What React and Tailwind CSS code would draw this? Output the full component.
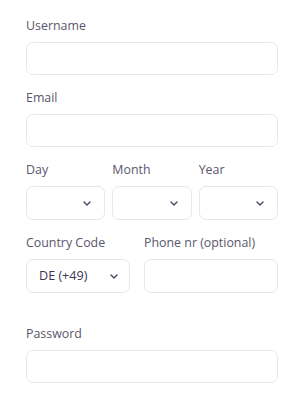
import React from "react";

const Chevron = () => (
  <svg width="8" height="5" viewBox="0 0 8 5" fill="none" className="shrink-0">
    <path d="M1 1l3 3 3-3" stroke="#4a4360" strokeWidth="1.4" strokeLinecap="round" strokeLinejoin="round" />
  </svg>
);

const Label = ({ children }) => (
  <div className="h-[17px] pt-px leading-[16px] text-[12.4px] text-[#5a566c] mb-[8px] whitespace-nowrap">{children}</div>
);

const Input = () => (
  <div className="h-[33px] rounded-[7px] border border-[#e7e6ee] bg-white" />
);

const Select = ({ value, pr = "pr-[13px]" }) => (
  <div className={`h-[34px] rounded-[7px] border border-[#e7e6ee] bg-white flex items-center justify-between pl-[12px] ${pr}`}>
    <span className="text-[12.6px] text-[#3d3553]">{value}</span>
    <Chevron />
  </div>
);

export default function App() {
  return (
    <div className="w-[304px] h-[400px] bg-white px-[26px] pt-[17px]" style={{ fontFamily: '"Open Sans", sans-serif' }}>
      <div>
        <Label>Username</Label>
        <Input />
      </div>
      <div className="mt-[14px]">
        <Label>Email</Label>
        <Input />
      </div>
      <div className="mt-[14px] grid grid-cols-3 gap-x-[7px]">
        <div>
          <Label>Day</Label>
          <Select value="" />
        </div>
        <div>
          <Label>Month</Label>
          <Select value="" />
        </div>
        <div>
          <Label>Year</Label>
          <Select value="" />
        </div>
      </div>
      <div className="mt-[14px] flex gap-[14px]">
        <div className="w-[104px]">
          <Label>Country Code</Label>
          <Select value="DE (+49)" pr="pr-[11px]" />
        </div>
        <div className="flex-1">
          <Label>Phone nr (optional)</Label>
          <div className="h-[34px] rounded-[7px] border border-[#e7e6ee] bg-white" />
        </div>
      </div>
      <div className="mt-[32px]">
        <Label>Password</Label>
        <Input />
      </div>
    </div>
  );
}
